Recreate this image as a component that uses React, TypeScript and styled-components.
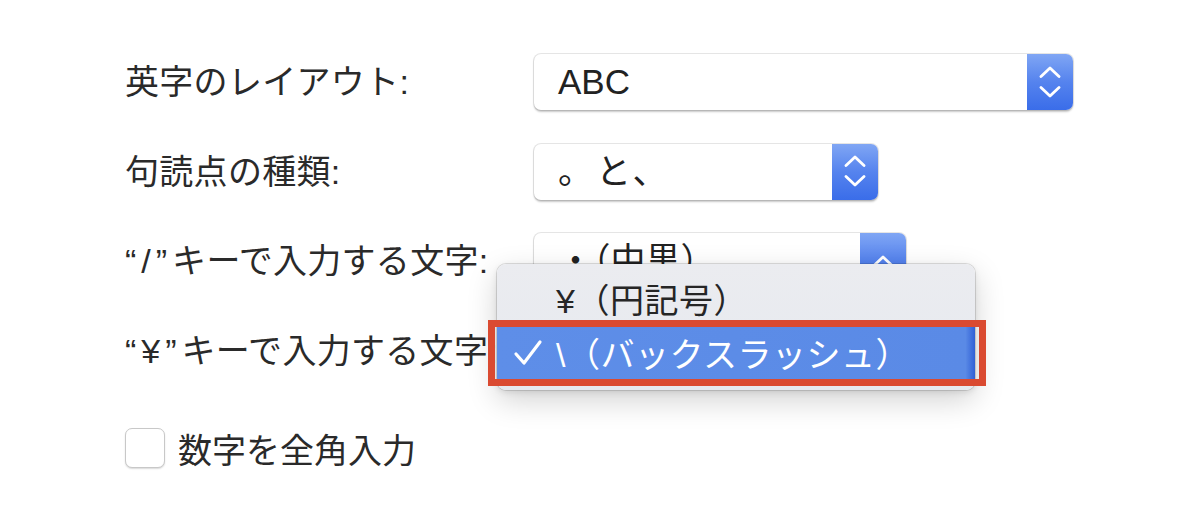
import React from 'react';
import styled, {createGlobalStyle} from "styled-components";

const GlobalStyle = createGlobalStyle`
    html, body {
        margin: 0;
        padding: 0;
        background: #ffffff;
    }
    body {
        font-family: "Liberation Sans", "Noto Sans CJK JP", sans-serif;
        color: #262626;
        -webkit-font-smoothing: antialiased;
    }
`

type PopupItem = {
    width: number
    value: string
    spacing?: number
    onlyUp?: boolean
}

type Row = {
    quote?: string
    label: string
    popup: PopupItem
}

const rows: Row[] = [
    {label: '英字のレイアウト:', popup: {width: 539, value: 'ABC'}},
    {label: '句読点の種類:', popup: {width: 344, value: '。と、', spacing: 3}},
    {quote: '“/”', label: 'キーで入力する文字:', popup: {width: 372, value: '・（中黒）', onlyUp: true}},
]

const Chevron = ({up}: { up: boolean }) => (
    <svg width="22" height="12" viewBox="0 0 22 12">
        <path
            d={up ? 'M2 10.5 L11 2 L20 10.5' : 'M2 1.5 L11 10 L20 1.5'}
            fill="none"
            stroke="#ffffff"
            strokeWidth="2.8"
            strokeLinecap="round"
            strokeLinejoin="round"
        />
    </svg>
)

const Check = () => (
    <svg width="30" height="28" viewBox="0 0 30 28">
        <path d="M3 15 L11 24 L27 3" fill="none" stroke="#ffffff" strokeWidth="3.2" strokeLinecap="round"
              strokeLinejoin="round"/>
    </svg>
)

const Popup = ({item, hidden}: { item: PopupItem, hidden?: boolean }) => (
    <PopupButton w={item.width} style={hidden ? {visibility: 'hidden'} : undefined}>
        <PopupValue spacing={item.spacing ?? 0}>{item.value}</PopupValue>
        <Stepper>
            <Chevron up/>
            {!item.onlyUp && <Chevron up={false}/>}
        </Stepper>
    </PopupButton>
)

export default function App() {
    return <Page>
        <GlobalStyle/>
        <Form>
            {rows.map(r => (
                <React.Fragment key={r.label}>
                    <Label>{r.quote && <Quote>{r.quote}</Quote>}{r.label}</Label>
                    <Popup item={r.popup}/>
                </React.Fragment>
            ))}
            <Label><Quote>“¥”</Quote>キーで入力する文字:</Label>
            <MenuAnchor>
                <Popup item={{width: 372, value: '\\（バックスラッシュ）'}} hidden/>
                <Menu>
                    <MenuItem>
                        <CheckCol/>
                        <span>¥（円記号）</span>
                    </MenuItem>
                    <MenuItem selected>
                        <CheckCol><Check/></CheckCol>
                        <span>\（バックスラッシュ）</span>
                    </MenuItem>
                    <Highlight/>
                </Menu>
            </MenuAnchor>
            <CheckRow>
                <CheckBox/>
                <span>数字を全角入力</span>
            </CheckRow>
        </Form>
    </Page>
}

const Page = styled.div`
    padding: 54px 0 0 125px;
    width: 1200px;
    height: 522px;
    box-sizing: border-box;
    overflow: hidden;
`

const Form = styled.div`
    display: grid;
    grid-template-columns: 409px auto;
    grid-auto-rows: 56px;
    row-gap: 33.5px;
    align-items: center;
`

const Label = styled.div`
    font-size: 34px;
    line-height: 56px;
    letter-spacing: 0.3px;
    white-space: nowrap;
    color: #2a2a2a;
`

const Quote = styled.span`
    letter-spacing: 5px;
`

const PopupButton = styled.div<{ w: number }>`
    width: ${props => props.w}px;
    height: 56px;
    box-sizing: border-box;
    display: flex;
    align-items: stretch;
    background: #ffffff;
    border-radius: 7px;
    box-shadow: 0 0 0 1px rgba(0, 0, 0, 0.09), 0 1.5px 2px rgba(0, 0, 0, 0.22);
    overflow: hidden;
`

const PopupValue = styled.div<{ spacing: number }>`
    flex: 1;
    padding-left: 24px;
    font-size: 35px;
    line-height: 56px;
    letter-spacing: ${props => props.spacing}px;
    color: #222;
    white-space: nowrap;
    overflow: hidden;
`

const Stepper = styled.div`
    width: 46px;
    display: flex;
    flex-direction: column;
    align-items: center;
    justify-content: center;
    gap: 8px;
    padding-bottom: 1px;
    background: linear-gradient(to bottom, #80a6f4 0%, #5583ee 50%, #3a6de9 100%);
`

const MenuAnchor = styled.div`
    position: relative;
    height: 56px;
`

const Menu = styled.div`
    position: absolute;
    left: -37px;
    top: -59px;
    width: 478px;
    box-sizing: border-box;
    padding: 8px 0 10px;
    background: linear-gradient(to bottom, #ebecf0, #e6e9ef);
    border-radius: 9px;
    box-shadow: 0 0 0 1px rgba(0, 0, 0, 0.12), 0 10px 30px rgba(0, 0, 0, 0.18), 0 2px 6px rgba(0, 0, 0, 0.1);
    z-index: 2;
`

const MenuItem = styled.div<{ selected?: boolean }>`
    position: relative;
    display: flex;
    align-items: center;
    height: 54px;
    font-size: 34px;
    letter-spacing: 0.5px;
    white-space: nowrap;
    color: ${props => props.selected ? '#ffffff' : '#262626'};
    background: ${props => props.selected ? 'linear-gradient(to right, #5e8ee8 0%, #5a8ae6 98%, #3160d6 100%)' : 'transparent'};
`

const CheckCol = styled.div`
    width: 59px;
    display: flex;
    justify-content: center;
    padding-left: 2px;
    box-sizing: border-box;
`

const Highlight = styled.div`
    position: absolute;
    left: -9px;
    top: 56px;
    width: 498px;
    height: 66px;
    box-sizing: border-box;
    border: 7.5px solid #da4a31;
    pointer-events: none;
`

const CheckRow = styled.div`
    grid-column: 1 / span 2;
    display: flex;
    align-items: center;
    gap: 13px;
    margin-top: 16px;
    font-size: 34px;
    color: #2a2a2a;
`

const CheckBox = styled.div`
    width: 40px;
    height: 40px;
    box-sizing: border-box;
    border-radius: 7px;
    background: #ffffff;
    border: 1.5px solid #c8c8c8;
    box-shadow: 0 1px 1.5px rgba(0, 0, 0, 0.15);
`
